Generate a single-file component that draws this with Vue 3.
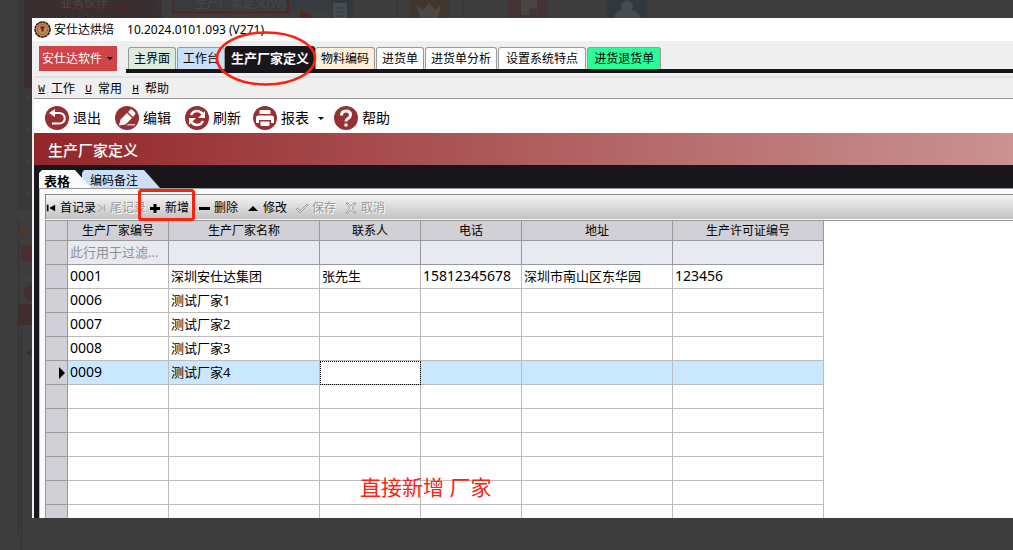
<script setup>
import { ref } from 'vue'

const tabs = [
  { label: '主界面', tone: 'green' },
  { label: '工作台', tone: 'blue' },
  { label: '生产厂家定义', tone: 'active' },
  { label: '物料编码', tone: 'cream' },
  { label: '进货单', tone: 'plain' },
  { label: '进货单分析', tone: 'plain' },
  { label: '设置系统特点', tone: 'plain wide' },
  { label: '进货退货单', tone: 'mint' },
]
const menus = [
  { key: 'W', label: '工作' },
  { key: 'U', label: '常用' },
  { key: 'H', label: '帮助' },
]
const tools = [
  { icon: 'exit', label: '退出' },
  { icon: 'edit', label: '编辑' },
  { icon: 'refresh', label: '刷新' },
  { icon: 'print', label: '报表', drop: true },
  { icon: 'help', label: '帮助' },
]
const actions = [
  { icon: 'first', label: '首记录', nav: true },
  { icon: 'last', label: '尾记录', nav: true, off: true },
  { icon: 'add', label: '新增' },
  { icon: 'remove', label: '删除' },
  { icon: 'modify', label: '修改' },
  { icon: 'save', label: '保存', off: true },
  { icon: 'cancel', label: '取消', off: true },
]
const columns = ['生产厂家编号', '生产厂家名称', '联系人', '电话', '地址', '生产许可证编号']
const rows = [
  ['0001', '深圳安仕达集团', '张先生', '15812345678', '深圳市南山区东华园', '123456'],
  ['0006', '测试厂家1', '', '', '', ''],
  ['0007', '测试厂家2', '', '', '', ''],
  ['0008', '测试厂家3', '', '', '', ''],
  ['0009', '测试厂家4', '', '', '', ''],
  ...Array.from({ length: 6 }, () => ['', '', '', '', '', '']),
]
const selected = ref(4)
const isNumber = (text) => /^\d+$/.test(text)
</script>

<template>
  <div class="page">
    <svg class="backdrop" width="700" height="550" viewBox="0 0 700 550" aria-hidden="true">
      <rect x="18" width="14" height="210" fill="#383838" />
      <rect x="24" width="136" height="88" fill="#392f30" />
      <path d="M24 11.500H160M24 30.500H32M24 49.500H32M24 69.500H32" stroke="#333" />
      <path d="M26 94l3 3-3 3M26 126l3 3-3 3M26 158l3 3-3 3M26 190l3 3-3 3" fill="none" stroke="#484848" />
      <path d="M54.500 0V8.500H126.500V0" fill="none" stroke="#4c2626" />
      <text x="60" y="8" class="ghost">业务伙伴</text>
      <rect x="158" width="4" height="18" fill="#343434" />
      <rect x="172" width="158" height="10" fill="#363b40" />
      <path d="M173 0V12.500H288V0" fill="none" stroke="#532525" stroke-width="2" />
      <text x="195" y="8" class="ghost">生产厂家定义(W)</text>
      <path d="M300 10l12 6v2h-12z" fill="#532525" />
      <rect x="331" width="22" height="18" fill="#303840" />
      <path d="M333 3h14v15h-14z" fill="#464b4f" />
      <path d="M336 8h8M336 12h8M336 16h8" stroke="#303840" />
      <path d="M397.500 0V18M462.500 0V18" stroke="#323232" />
      <rect x="410" width="40" height="18" fill="#41362e" />
      <path d="M417 5l6 5 6-7 6 7 6-5-3 13h-18z" fill="#4a4744" />
      <rect x="508" width="40" height="18" fill="#413432" />
      <path d="M521 0h16v15h-16z" fill="#4a4544" />
      <circle cx="533" cy="12" r="4" fill="#413432" />
      <rect x="607" width="40" height="18" fill="#303840" />
      <path d="M614 18q1-7 8-8-3-8 5-10 8 2 5 10 7 1 8 8z" fill="#464b4f" />
      <path d="M18.500 220V534M21.500 330V550" stroke="#363636" stroke-width="2" />
      <circle cx="22" cy="233" r="5" fill="#48392d" />
      <rect x="21" y="246" width="11" height="15" fill="#482e2f" />
      <path d="M18 280H32" stroke="#464646" />
      <path d="M32 285a8 8 0 0 0 0 16z" fill="#432e2f" />
      <rect x="18" y="304" width="14" height="21" fill="#402d2e" />
      <path d="M26 353l5-3v6z" fill="#303030" />
      <path d="M0 538.500H700M39.500 518V550M209.500 518V550M277.500 518V550M345.500 518V550" stroke="#3a3a3a" />
    </svg>

    <main class="window">
      <header class="title">
        <svg width="17" height="17" viewBox="0 0 17 17" aria-hidden="true">
          <circle cx="8.500" cy="8.500" r="7.500" fill="#bd8b58" stroke="#2b1608" stroke-width="1.500" stroke-dasharray="3 .5" />
          <circle cx="8.500" cy="8.500" r="5" fill="none" stroke="#8d572d" stroke-dasharray="2 1" />
          <path d="M6.500 5.500h4v2h-1v3h-2v-3h-1z" fill="#781b12" />
        </svg>
        <span>安仕达烘焙</span>
        <span class="version">10.2024.0101.093 (V271)</span>
      </header>

      <div class="tabrow">
        <button class="brand">安仕达软件<i class="caret"></i></button>
        <nav class="tabs">
          <button v-for="t in tabs" :key="t.label" class="tab" :class="t.tone">{{ t.label }}</button>
        </nav>
      </div>

      <nav class="menubar">
        <button v-for="m in menus" :key="m.key"><u>{{ m.key }}</u>{{ m.label }}</button>
      </nav>

      <div class="tools">
        <button v-for="t in tools" :key="t.icon" :class="{ drop: t.drop }">
          <svg width="24" height="24" viewBox="0 0 24 24" aria-hidden="true">
            <circle cx="12" cy="12" r="12" fill="#982f33" />
            <g v-if="t.icon === 'exit'" fill="none" stroke="#fff" stroke-width="2">
              <path d="M7 7H14.500a5 5 0 0 1 0 10.500H7" />
              <path d="M4 7l6-4v8z" fill="#fff" stroke="none" />
            </g>
            <g v-else-if="t.icon === 'edit'" fill="#fff">
              <path d="M4 19.500l1.500-6 6.500-6.500 5 5-6.500 6.500zM13 6l2.500-2.500q1-.5 2 .5l2.500 2.500q1 1 0 2L18 11z" />
              <path d="M13 18h7v1.500h-8.500z" opacity=".7" />
            </g>
            <g v-else-if="t.icon === 'refresh'" fill="none" stroke="#fff" stroke-width="2.500">
              <path d="M6 9q2-4 6-4 3.500 0 5.500 3M18 15q-2 4-6 4-3.500 0-5.500-3" />
              <path d="M20 5v7h-7zM4 19v-7h7z" fill="#fff" stroke="none" />
            </g>
            <g v-else-if="t.icon === 'print'" fill="#fff">
              <path d="M7.500 4h9q1 0 1 1v3h-11V5q0-1 1-1zM5.500 9.500h13q2.500 0 2.500 2.500v5h-3v-3H6v3H3v-5q0-2.500 2.500-2.500z" />
              <path d="M7.500 15.500h9V19q0 1-1 1h-7q-1 0-1-1z" />
            </g>
            <g v-else fill="none" stroke="#fff" stroke-width="3">
              <path d="M7.500 9.500q0-4.500 4.500-4.500t4.500 4q0 2-2.500 3.500-2 1-2 3" />
              <path d="M12 17.500v3" />
            </g>
          </svg>
          {{ t.label }}<i v-if="t.drop" class="caret"></i>
        </button>
      </div>

      <h1>生产厂家定义</h1>

      <section class="body">
        <div class="subtabs">
          <button class="sub on">表格</button>
          <button class="sub">编码备注</button>
        </div>
        <div class="panel">
          <div class="actions">
            <button v-for="a in actions" :key="a.icon" :class="{ nav: a.nav }" :disabled="a.off">
              <svg width="12" height="12" viewBox="0 0 12 12" aria-hidden="true">
                <path v-if="a.icon === 'first'" d="M1 2h2v8H1zM4 6l7-4v8z" fill="currentColor" />
                <path v-else-if="a.icon === 'last'" d="M2 2l6 4-6 4M10 2v8" fill="none" stroke="currentColor" />
                <path v-else-if="a.icon === 'add'" d="M6 2v9M1 6.500h10" stroke="currentColor" stroke-width="3" />
                <path v-else-if="a.icon === 'remove'" d="M1 6.500h11" stroke="currentColor" stroke-width="3" />
                <path v-else-if="a.icon === 'modify'" d="M1 9l5-5 5 5z" fill="currentColor" />
                <path v-else-if="a.icon === 'save'" d="M0 7l2-1 2 3 7-7 1 1-8 8z" fill="#eee" stroke="currentColor" />
                <path v-else d="M1 1l2 0 3 3 3-3h2l-4 5 4 5h-2l-3-3-3 3H1l4-5z" fill="#eee" stroke="currentColor" />
              </svg>
              <span>{{ a.label }}</span>
            </button>
          </div>
          <div class="grid">
            <table>
              <colgroup>
                <col class="c-mark" /><col class="c-s" /><col class="c-l" /><col class="c-s" /><col class="c-s" /><col class="c-l" /><col class="c-l" />
              </colgroup>
              <thead>
                <tr>
                  <th></th>
                  <th v-for="c in columns" :key="c">{{ c }}</th>
                </tr>
              </thead>
              <tbody>
                <tr class="filter">
                  <th></th>
                  <td>此行用于过滤...</td>
                  <td v-for="n in 5" :key="n"></td>
                </tr>
                <tr v-for="(r, i) in rows" :key="i" :class="{ selected: i === selected }" @click="selected = i">
                  <th><i v-if="i === selected" class="marker"></i></th>
                  <td v-for="(v, j) in r" :key="j" :class="{ num: isNumber(v), focus: i === selected && j === 2 }">{{ v }}</td>
                </tr>
              </tbody>
            </table>
          </div>
        </div>
      </section>
    </main>

    <svg class="marks" width="330" height="230" viewBox="0 0 330 230" aria-hidden="true">
      <ellipse cx="266" cy="58.500" rx="49" ry="26" fill="none" stroke="#fb2310" stroke-width="2.500" />
      <rect x="139.500" y="190.500" width="54" height="29" rx="2" fill="none" stroke="#fb2310" stroke-width="3" />
    </svg>
    <p class="note">直接新增 厂家</p>
  </div>
</template>

<style>
body { margin: 0; background: #3d3d3d; }
</style>

<style scoped>
* { box-sizing: border-box; }
.page {
  position: relative;
  display: flex;
  flex-direction: column;
  height: 100vh;
  padding: 18px 0 32px 32px;
  overflow: hidden;
  background: #3d3d3d;
  color: #000;
  font: 12px/16px "Noto Sans", "Noto Sans CJK SC", sans-serif;
}
button { display: flex; align-items: center; margin: 0; padding: 0; border: 0; background: none; color: inherit; font: inherit; white-space: nowrap; }
.backdrop, .marks { position: absolute; left: 0; top: 0; pointer-events: none; }
.ghost { font-size: 12px; fill: #4b4646; }
.window { position: relative; display: flex; flex: 1; flex-direction: column; min-height: 0; overflow: hidden; background: #efefef; }
.title { display: flex; flex: none; align-items: center; height: 23px; padding-left: 2px; background: #fff; }
.title svg { margin-right: 3px; }
.version { margin-left: 13px; }
.tabrow { display: flex; flex: none; align-items: flex-start; height: 35px; padding: 5px 0 0 7px; }
.brand { gap: 5px; height: 25px; padding: 0 4px 0 3px; background: #cf4447; color: #fff; }
.caret { width: 0; border: 3px solid transparent; border-top-color: #000; border-bottom: 0; }
.tabs { display: flex; flex: 1; align-items: flex-end; gap: 1px; height: 27px; margin-left: 9px; padding-left: 2px; border-bottom: 4px solid #18161b; }
.tab { justify-content: center; height: 22px; padding: 0 5px; border: 1px solid #999; border-bottom: 0; border-radius: 3px 3px 0 0; background: #fff; }
.tab.green { background: #dcecdc; }
.tab.blue { background: #cbdff8; }
.tab.active { height: 23px; margin: 0 -1px; border-color: #18161b; background: #18161b; color: #fff; font-size: 13px; font-weight: bold; }
.tab.cream { background: #fdefd9; }
.tab.wide { padding: 0 7px; }
.tab.mint { padding: 0 6px; background: #2dfd99; }
.menubar { display: flex; flex: none; gap: 10px; height: 23px; margin-left: 2px; padding: 2px 0 0 4px; border-top: 2px solid #e2e2e2; border-bottom: 1px solid #999; }
.menubar u { width: 7px; margin-right: 6px; font: 11px/14px "Liberation Mono", monospace; }
.tools { display: flex; flex: none; align-items: center; gap: 14px; height: 34px; margin-left: 2px; padding: 4px 0 0 11px; background: #fff; font-size: 14px; }
.tools button { gap: 4px; }
.tools .drop { margin: 0 -4px 0 -2px; }
.tools .caret { margin-left: 5px; }
h1 { flex: none; height: 32px; margin: 0 0 0 2px; padding-left: 14px; background: linear-gradient(90deg, #932629, #ca9292); color: #fff; font-size: 15px; font-weight: 500; line-height: 34px; }
.body { display: flex; flex: 1; flex-direction: column; min-height: 0; margin-left: 2px; padding: 5px 0 0 5px; background: #18161b; }
.subtabs { display: flex; flex: none; height: 18px; }
.sub { height: 18px; padding: 4px 0 0 8px; width: 78px; margin-left: -9px; background: #cbdff8; clip-path: polygon(0 3px, 2px 0, 62px 0, 100% 100%, 0 100%); }
.sub.on { z-index: 1; width: 52px; margin-left: 0; padding-left: 5px; background: #fafafa; font-size: 13px; font-weight: bold; clip-path: polygon(0 3px, 3px 0, 36px 0, 100% 100%, 0 100%); }
.panel { display: flex; flex: 1; flex-direction: column; min-height: 0; padding: 5px 0 0 5px; border-top: 1px solid #999; border-left: 1px solid #bbb; background: #fafafa; }
.actions { display: flex; flex: none; gap: 9px; height: 25px; padding-top: 2px; border-top: 1px solid #888; border-left: 1px solid #888; background: linear-gradient(#f4f4f4, #c2c2c2); }
.actions button { gap: 4px; }
.actions button:disabled { color: #999; text-shadow: 1px 1px #fff; }
.actions .nav { flex: none; width: 50px; margin-right: -9px; overflow: hidden; }
.actions .nav + button:not(.nav) { margin-left: 3px; }
.grid { flex: 1; min-height: 0; margin-top: 1px; overflow: hidden; border-top: 1px solid #999; background: #fff; }
table { width: 779px; border-spacing: 0; table-layout: fixed; }
.c-mark { width: 23px; }
.c-s { width: 101px; }
.c-l { width: 151px; }
th, td { height: 24px; padding: 0 2px; overflow: hidden; border-right: 1px solid #bcbcbc; border-bottom: 1px solid #bcbcbc; white-space: nowrap; }
th { border-color: #999; background: #d0d0d6; font-weight: normal; }
thead th { height: 20px; }
tr th:first-child { border-left: 1px solid #999; }
td { padding: 0 2px 2px; font-size: 13px; }
td.num { font-size: 14px; }
.filter td { border-color: #999; background: #e7eaf0; color: #909090; }
.selected td { background: #c9e7ff; }
td.focus { background: #fff; outline: 1px dotted #000; outline-offset: -1px; }
.marker { display: block; width: 0; margin-left: auto; border: 6px solid transparent; border-left-color: #000; border-right: 0; }
.note { position: absolute; left: 360px; top: 473px; margin: 0; color: #fb2310; font-size: 21px; line-height: 28px; }
</style>
